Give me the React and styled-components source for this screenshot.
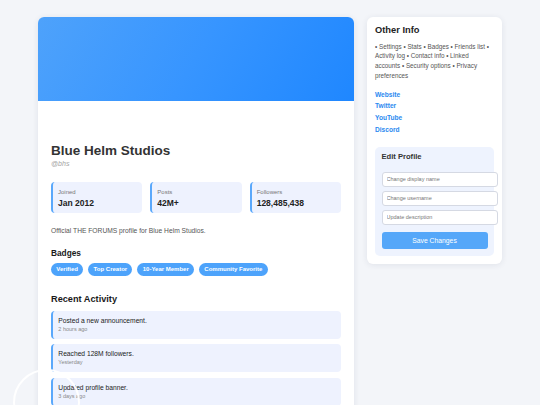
import React from "react";
import styled, { createGlobalStyle } from "styled-components";

const Global = createGlobalStyle`
  html, body { margin: 0; padding: 0; background: #f3f5f9; }
  body { font-family: "Liberation Sans", Arial, sans-serif; color: #333; overflow: hidden; }
  * { box-sizing: border-box; }
`;

const Page = styled.div`
  display: flex;
  align-items: flex-start;
  gap: 13px;
  width: 464px;
  margin: 17px auto 0;
`;

const MainCard = styled.div`
  width: 316px;
  flex-shrink: 0;
  background: #fff;
  border-radius: 6px;
  box-shadow: 0 1px 6px rgba(30, 40, 80, 0.09);
  overflow: hidden;
`;

const Banner = styled.div`
  height: 84px;
  background: linear-gradient(120deg, #4ea2fb 0%, #3795ff 50%, #1f87ff 100%);
`;

const Body = styled.div`
  padding: 42px 13px 20px;
`;

const Name = styled.h1`
  margin: 0;
  font-size: 13.5px;
  line-height: 16px;
  font-weight: 700;
  color: #333;
`;

const Handle = styled.div`
  font-size: 7px;
  line-height: 9px;
  font-style: italic;
  color: #a3a3a3;
`;

const Stats = styled.div`
  display: grid;
  grid-template-columns: repeat(3, 1fr);
  gap: 8px;
  margin-top: 14px;
`;

const Stat = styled.div`
  height: 31px;
  background: #eef2fe;
  border-left: 2px solid #5aa8fb;
  border-radius: 4px;
  padding: 6px 5px 0;
`;

const StatLabel = styled.div`
  font-size: 6px;
  line-height: 8px;
  color: #777;
  margin-bottom: 1.5px;
`;

const StatValue = styled.div`
  font-size: 8.5px;
  line-height: 11px;
  font-weight: 700;
  color: #222;
`;

const Desc = styled.p`
  margin: 13px 0 0;
  font-size: 6.7px;
  line-height: 10px;
  color: #555;
`;

const SectionTitle = styled.h3`
  margin: ${(p) => p.$mt}px 0 0;
  font-size: ${(p) => p.$size}px;
  line-height: ${(p) => p.$lh}px;
  font-weight: 700;
  color: #1a1a1a;
`;

const BadgeRow = styled.div`
  display: flex;
  gap: 5px;
  margin-top: 3.4px;
`;

const Badge = styled.span`
  height: 13.3px;
  line-height: 13.3px;
  padding: 0 5.3px;
  border-radius: 7px;
  background: #4da3fb;
  color: #fff;
  font-size: 6px;
  font-weight: 700;
  white-space: nowrap;
`;

const ActivityList = styled.div`
  display: flex;
  flex-direction: column;
  gap: 5.5px;
  margin-top: 6px;
`;

const Activity = styled.div`
  height: 28px;
  background: #eef2fe;
  border-left: 2px solid #5aa8fb;
  border-radius: 4px;
  padding: 4.8px 6px 0 5.3px;
`;

const ActivityText = styled.div`
  font-size: 6.7px;
  line-height: 9px;
  color: #222;
`;

const ActivityTime = styled.div`
  font-size: 5.5px;
  line-height: 8px;
  color: #888;
`;

const SideCard = styled.div`
  width: 135px;
  flex-shrink: 0;
  background: #fff;
  border-radius: 6px;
  box-shadow: 0 1px 6px rgba(30, 40, 80, 0.09);
  padding: 7px 8px 8.3px;
`;

const SideTitle = styled.h2`
  margin: 0;
  font-size: 9.3px;
  line-height: 12px;
  font-weight: 700;
  color: #222;
`;

const InfoText = styled.p`
  margin: 5.8px 0 0;
  font-size: 6.3px;
  line-height: 9.6px;
  color: #555;
`;

const Links = styled.div`
  display: flex;
  flex-direction: column;
  margin-top: 8.4px;
`;

const LinkItem = styled.a`
  font-size: 6.6px;
  line-height: 11.8px;
  font-weight: 700;
  color: #2b8af0;
  text-decoration: none;
`;

const EditBox = styled.div`
  margin-top: 10.9px;
  background: #eef3fe;
  border-radius: 5px;
  padding: 5px 6.5px 6.4px;
`;

const EditTitle = styled.h4`
  margin: 0 0 10px;
  font-size: 7.6px;
  line-height: 10px;
  font-weight: 700;
  color: #333;
`;

const Inputs = styled.div`
  display: flex;
  flex-direction: column;
  gap: 3.5px;
`;

const Input = styled.input`
  box-sizing: content-box;
  display: block;
  width: 100%;
  height: 13.5px;
  margin: 0;
  padding: 0 4px;
  border: 1px solid #d5d9e3;
  border-radius: 3px;
  background: #fff;
  font-family: "Liberation Sans", Arial, sans-serif;
  font-size: 5.5px;
  outline: none;
  &::placeholder { color: #777; }
`;

const SaveButton = styled.button`
  display: block;
  width: 100%;
  height: 17.6px;
  margin-top: 6.4px;
  border: none;
  border-radius: 3px;
  background: #55a7f9;
  color: #fff;
  font-family: "Liberation Sans", Arial, sans-serif;
  font-size: 6.8px;
  cursor: pointer;
`;

const Ring = styled.div`
  position: fixed;
  left: 13px;
  top: 369px;
  width: 67px;
  height: 67px;
  border: 2px solid rgba(255, 255, 255, 0.95);
  border-radius: 50%;
  pointer-events: none;
`;

const stats = [
  { label: "Joined", value: "Jan 2012" },
  { label: "Posts", value: "42M+" },
  { label: "Followers", value: "128,485,438" },
];

const badges = ["Verified", "Top Creator", "10-Year Member", "Community Favorite"];

const activities = [
  { text: "Posted a new announcement.", time: "2 hours ago" },
  { text: "Reached 128M followers.", time: "Yesterday" },
  { text: "Updated profile banner.", time: "3 days ago" },
];

const links = ["Website", "Twitter", "YouTube", "Discord"];

export default function App() {
  return (
    <>
      <Global />
      <Page>
        <MainCard>
          <Banner />
          <Body>
            <Name>Blue Helm Studios</Name>
            <Handle>@bhs</Handle>
            <Stats>
              {stats.map((s) => (
                <Stat key={s.label}>
                  <StatLabel>{s.label}</StatLabel>
                  <StatValue>{s.value}</StatValue>
                </Stat>
              ))}
            </Stats>
            <Desc>Official THE FORUMS profile for Blue Helm Studios.</Desc>
            <SectionTitle $mt={12.3} $size={8.3} $lh={11}>Badges</SectionTitle>
            <BadgeRow>
              {badges.map((b) => (
                <Badge key={b}>{b}</Badge>
              ))}
            </BadgeRow>
            <SectionTitle $mt={17} $size={9.2} $lh={12}>Recent Activity</SectionTitle>
            <ActivityList>
              {activities.map((a) => (
                <Activity key={a.text}>
                  <ActivityText>{a.text}</ActivityText>
                  <ActivityTime>{a.time}</ActivityTime>
                </Activity>
              ))}
            </ActivityList>
          </Body>
        </MainCard>
        <SideCard>
          <SideTitle>Other Info</SideTitle>
          <InfoText>
            • Settings • Stats • Badges • Friends list • Activity log • Contact info • Linked accounts • Security options • Privacy preferences
          </InfoText>
          <Links>
            {links.map((l) => (
              <LinkItem key={l} href="#">{l}</LinkItem>
            ))}
          </Links>
          <EditBox>
            <EditTitle>Edit Profile</EditTitle>
            <Inputs>
              <Input placeholder="Change display name" />
              <Input placeholder="Change username" />
              <Input placeholder="Update description" />
            </Inputs>
            <SaveButton>Save Changes</SaveButton>
          </EditBox>
        </SideCard>
      </Page>
      <Ring />
    </>
  );
}
